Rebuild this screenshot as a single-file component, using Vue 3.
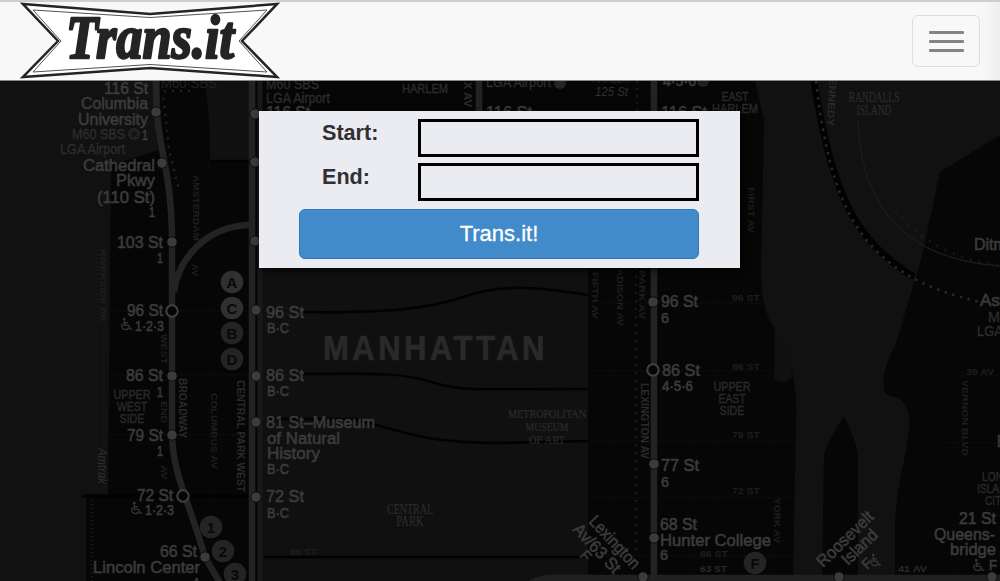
<script setup>
import { ref } from 'vue'

const start = ref('')
const end = ref('')

// Each label: text, x, baseline y, width, anchor (s/m/e), size, tone class
const labels = [
  ['116 St', 148, 94, 44, 'e', 17, 'station'],
  ['Columbia', 148, 109, 67, 'e', 17, 'station'],
  ['University', 148, 125, 70, 'e', 17, 'station'],
  ['M60 SBS', 125, 139, 53, 'e', 14.5, 'route'],
  ['1', 148, 140, 6, 'e', 14, 'station'],
  ['LGA Airport', 125, 154, 65, 'e', 14.5, 'route'],
  ['Cathedral', 155, 171, 72, 'e', 17, 'station'],
  ['Pkwy', 155, 186, 39, 'e', 17, 'station'],
  ['(110 St)', 155, 203, 58, 'e', 17, 'station'],
  ['1', 155, 217, 6, 'e', 14, 'station'],
  ['103 St', 163, 248, 46, 'e', 17, 'station'],
  ['1', 163, 263, 6, 'e', 14, 'station'],
  ['96 St', 163, 316, 36, 'e', 17, 'station'],
  ['1·2·3', 164, 331, 29, 'e', 14.5, 'station'],
  ['86 St', 163, 381, 37, 'e', 17, 'station'],
  ['1', 163, 397, 6, 'e', 14, 'station'],
  ['UPPER', 132, 399, 37, 'm', 13, 'area'],
  ['WEST', 132, 411, 30, 'm', 13, 'area'],
  ['SIDE', 132, 423, 25, 'm', 13, 'area'],
  ['79 St', 163, 441, 36, 'e', 17, 'station'],
  ['1', 163, 456, 6, 'e', 14, 'station'],
  ['72 St', 173, 501, 36, 'e', 17, 'station'],
  ['1·2·3', 174, 515, 29, 'e', 14.5, 'station'],
  ['66 St', 197, 557, 37, 'e', 17, 'station'],
  ['Lincoln Center', 200, 573, 107, 'e', 17, 'station'],
  ['1', 200, 588, 6, 'e', 14, 'station'],
  ['M60·SBS', 161, 88, 56, 's', 14, 'faint'],
  ['M60 SBS', 266, 89, 53, 's', 14.5, 'route'],
  ['LGA Airport', 266, 103, 64, 's', 14.5, 'route'],
  ['116 St', 266, 118, 44, 's', 17, 'station'],
  ['HARLEM', 402, 93, 46, 's', 13.5, 'area'],
  ['LGA Airport', 486, 87, 65, 's', 14.5, 'route'],
  ['116 St', 486, 118, 46, 's', 17, 'station'],
  ['HARLEM', 592, 83, 38, 's', 13, 'faint'],
  ['125 St', 595, 96, 33, 's', 12, 'slanted'],
  ['4·5·6', 663, 86, 33, 's', 15, 'station'],
  ['116 St', 661, 118, 46, 's', 17, 'station'],
  ['EAST', 735, 101, 27, 'm', 13, 'area'],
  ['HARLEM', 735, 113, 46, 'm', 13, 'area'],
  ['96 St', 266, 318, 38, 's', 17, 'station'],
  ['B·C', 267, 333, 22, 's', 14.5, 'station'],
  ['86 St', 266, 381, 38, 's', 17, 'station'],
  ['B·C', 267, 396, 22, 's', 14.5, 'station'],
  ['81 St–Museum', 266, 428, 109, 's', 17, 'station'],
  ['of Natural', 267, 444, 73, 's', 17, 'station'],
  ['History', 267, 459, 53, 's', 17, 'station'],
  ['B·C', 267, 474, 22, 's', 14.5, 'station'],
  ['72 St', 266, 502, 38, 's', 17, 'station'],
  ['B·C', 267, 518, 22, 's', 14.5, 'station'],
  ['66 ST', 290, 555, 27, 's', 9, 'street'],
  ['METROPOLITAN', 547, 418, 78, 'm', 13, 'serif'],
  ['MUSEUM', 547, 431, 43, 'm', 13, 'serif'],
  ['OF ART', 547, 444, 36, 'm', 13, 'serif'],
  ['CENTRAL', 410, 514, 46, 'm', 14, 'serif'],
  ['PARK', 410, 526, 27, 'm', 14, 'serif'],
  ['96 St', 661, 307, 37, 's', 17, 'station'],
  ['6', 661, 323, 8, 's', 14.5, 'station'],
  ['86 St', 662, 376, 38, 's', 17, 'station'],
  ['4·5·6', 662, 391, 31, 's', 14.5, 'station'],
  ['UPPER', 732, 391, 37, 'm', 13, 'area'],
  ['EAST', 732, 403, 27, 'm', 13, 'area'],
  ['SIDE', 732, 415, 25, 'm', 13, 'area'],
  ['77 St', 661, 471, 38, 's', 17, 'station'],
  ['6', 661, 487, 8, 's', 14.5, 'station'],
  ['68 St', 660, 530, 37, 's', 17, 'station'],
  ['Hunter College', 660, 546, 111, 's', 17, 'station'],
  ['6', 660, 560, 8, 's', 14.5, 'station'],
  ['96 ST', 732, 301, 28, 's', 9, 'street'],
  ['86 ST', 732, 370, 28, 's', 9, 'street'],
  ['79 ST', 732, 438, 28, 's', 9, 'street'],
  ['72 ST', 732, 494, 28, 's', 9, 'street'],
  ['66 ST', 700, 557, 28, 's', 9, 'street'],
  ['63 ST', 700, 572, 27, 's', 9, 'street bright'],
  ['39 AV', 966, 375, 28, 's', 9, 'street'],
  ['41 AV', 898, 572, 29, 's', 9, 'street bright'],
  ['RANDALLS', 874, 102, 51, 'm', 14, 'serif'],
  ['ISLAND', 874, 115, 35, 'm', 14, 'serif'],
  ['Ditmars', 974, 250, 55, 's', 17, 'station'],
  ['Astoria', 980, 306, 53, 's', 17, 'station'],
  ['M60', 988, 322, 28, 's', 14.5, 'route'],
  ['LGA Airport', 977, 336, 66, 's', 14.5, 'route'],
  ['E', 997, 447, 9, 's', 17, 'station'],
  ['LONG', 982, 481, 29, 's', 13, 'area'],
  ['ISLAND', 977, 493, 37, 's', 13, 'area'],
  ['CITY', 985, 505, 23, 's', 13, 'area'],
  ['21 St', 996, 524, 37, 'e', 17, 'station'],
  ['Queens-', 995, 540, 61, 'e', 17, 'station'],
  ['bridge', 996, 555, 46, 'e', 17, 'station'],
  ['F', 997, 570, 8, 'e', 14.5, 'station'],
]

// Street names turned along the avenues: text, x, y, width, size, angle, tone
const turned = [
  ['RIVERSIDE DR', 100, 249, 73, 9, 90, 'street'],
  ['AMSTERDAM', 193, 175, 66, 9, 90, 'street'],
  ['AV', 192, 264, 12, 9, 90, 'street'],
  ['WEST', 161, 334, 30, 9, 90, 'street'],
  ['END', 161, 401, 22, 9, 90, 'street'],
  ['AV', 161, 465, 14, 9, 90, 'street'],
  ['BROADWAY', 179, 378, 60, 10, 90, 'street bright'],
  ['COLUMBUS AV', 211, 393, 76, 9, 90, 'street'],
  ['CENTRAL PARK WEST', 237, 380, 112, 10, 90, 'street bright'],
  ['Amtrak', 98, 448, 36, 12, 90, 'slanted'],
  ['LENOX AV', 464, 50, 57, 11, 90, 'street bright'],
  ['FIFTH AV', 592, 272, 47, 9, 90, 'street'],
  ['MADISON AV', 617, 260, 66, 9, 90, 'street'],
  ['PARK AV', 639, 270, 49, 9, 90, 'street'],
  ['LEXINGTON AV', 641, 383, 76, 10, 90, 'street bright'],
  ['FIRST AV', 748, 187, 46, 9, 90, 'street'],
  ['YORK AV', 774, 498, 45, 9, 90, 'street'],
  ['VERNON BLVD', 962, 380, 76, 9, 90, 'street'],
  ['KENNEDY', 830, 69, 57, 10, 93, 'street bright'],
  ['Lexington', 588, 522, 66, 17, 47, 'station'],
  ['Av/63 St', 572, 530, 61, 17, 47, 'station'],
  ['F', 579, 556, 9, 15, 47, 'station'],
  ['Roosevelt', 823, 568, 72, 17, -44, 'station'],
  ['Island', 848, 566, 43, 17, -44, 'station'],
  ['F', 867, 570, 9, 14, -44, 'station'],
]

const stops = [
  [156, 112], [162, 163], [172, 242], [172, 376], [172, 435], [205, 557],
  [255, 114], [255, 162], [255, 241], [256, 310], [256, 376], [256, 422], [256, 497],
  [653, 302], [654, 464], [654, 538], [643, 577], [839, 577], [992, 577],
]
const hubs = [[172, 311], [183, 496], [653, 370]]
const bullets = [
  ['A', 232, 282, 1], ['C', 232, 308, 1], ['B', 232, 333, 0], ['D', 232, 359, 0],
  ['1', 211, 527, 0], ['2', 223, 551, 0], ['3', 235, 574, 0], ['F', 755, 563, 0],
]
const access = [[119, 317], [129, 501], [971, 558], [868, 553]]
const anchors = { s: 'start', m: 'middle', e: 'end' }
</script>

<template>
  <div class="page">
    <header class="navbar">
      <a class="brand" aria-label="Trans.it">
        <svg width="260" height="78" viewBox="20 2 260 78">
          <path d="M23 4 L150 14 L277 4 L242 41 L277 77 L150 68 L23 77 L58 41 Z" fill="#fff" stroke="#252325" stroke-width="2.5" />
          <path d="M33 10 L150 17.5 L267 10 L239 41 L267 72 L150 64.5 L33 72 L61 41 Z" fill="none" stroke="#555355" stroke-width="1" />
          <text class="logo-text" x="66" y="58" textLength="168" lengthAdjust="spacingAndGlyphs">Trans.it</text>
        </svg>
      </a>
      <button class="toggle" type="button" aria-label="Menu"><i></i><i></i><i></i></button>
    </header>

    <main class="hero">
      <svg class="map" width="1000" height="500" viewBox="0 81 1000 500">
        <defs>
          <symbol id="wheelchair" viewBox="0 0 16 16">
            <circle cx="6" cy="1.8" r="1.6" fill="#363636" />
            <path d="M6 3.5 V9 H11 L13 13.5 L15 13 M6 6 H10 M4 7 A4.2 4.2 0 1 0 11 12" fill="none" stroke="#363636" stroke-width="1.5" />
          </symbol>
        </defs>
        <rect y="81" width="1000" height="500" fill="#111" />
        <!-- Manhattan -->
        <path d="M111 165 L160 150 V81 H755 L764 120 L761 275 Q762 310 773 326 L788 355 Q798 390 796 420 L793 581 H86 V494 H108 Z" fill="#060606" />
        <path d="M774 326 Q791 352 792 377 Q783 387 774 379 Z" fill="#101010" />
        <path d="M205 81 H250 V160 H210 V130 Z" fill="#101010" />
        <rect x="262" y="160" width="326" height="421" fill="#101010" />
        <!-- Queens and Roosevelt Island -->
        <path d="M1000 135 L940 172 L921 260 L896 343 Q881 370 884 390 Q885 397 896 397 Q911 403 909 430 Q907 450 902 470 Q895 500 895 530 V581 H1000 Z" fill="#060606" />
        <path d="M822 581 L824 455 Q828 440 844 416 Q856 440 858 455 V581 Z" fill="#060606" />

        <g fill="none" stroke="#090909">
          <path d="M158 160 V581 M209 160 V581 M614 270 V575 M690 270 V575 M717 270 V575 M744 270 V575 M774 326 V575 M959 340 V581" />
          <path d="M111 311 H250 M111 375 H250 M111 435 H250 M588 303 H765 M588 371 H775 M588 441 H793 M588 498 H793 M588 556 H793 M942 376 H1000 M940 443 H1000" stroke-width="2" />
        </g>
        <g fill="none" stroke="#020202" stroke-width="2.5">
          <path d="M304 312 C380 313 425 310 463 297 S530 286 588 295" />
          <path d="M304 374 C380 373 405 373 435 383 S510 388 588 389" />
          <path d="M266 419 H355 C395 429 420 443 500 443 L588 441" />
          <path d="M264 557 H588 M82 496 H250 M210 161 H250" />
          <path d="M814 81 C831 190 853 240 914 277" stroke-width="7" />
        </g>
        <g fill="none" stroke="#222">
          <path d="M97 250 V494 M104 250 V494 M92 500 V581" stroke="#171717" stroke-width="3" stroke-dasharray="1 3" />
          <path d="M636 260 V555" stroke="#191919" stroke-width="2" stroke-dasharray="2 6" />
          <path d="M190 91 H166 Q162 92 164 102 L169 150 L179 190" stroke-width="2.5" stroke-dasharray="2 6" />
          <path d="M816 81 C831 210 861 275 980 302" stroke="#292929" stroke-width="2.5" stroke-dasharray="2.5 5.5" />
          <path d="M858 120 C860 190 890 258 1000 266" stroke="#1b1b1b" stroke-width="1.5" />
          <path d="M896 211 Q933 257 1000 265" stroke="#242424" stroke-width="3" stroke-dasharray="1 8" />
        </g>
        <!-- Subway lines -->
        <g fill="none" stroke="#232323" stroke-width="6.5">
          <path d="M156 81 C155 150 172 162 172 243 V432 C172 472 187 496 205 557 L224 590" />
          <path d="M174 292 C178 260 205 226 250 225" />
          <path d="M252 81 V581" /><path d="M260 81 V581" stroke="#191919" stroke-width="5" />
          <path d="M479 81 V120 M654 81 V581" />
          <path d="M530 584 Q540 578 550 578 H1000" stroke="#202020" />
          <path d="M637 81 V112" stroke="#171717" stroke-dasharray="2 5" stroke-width="3" />
        </g>

        <text class="borough" x="323" y="360" textLength="225" lengthAdjust="spacingAndGlyphs">MANHATTAN</text>
        <text
          v-for="(l, i) in labels" :key="'l' + i" :class="l[6]" :x="l[1]" :y="l[2]"
          :text-anchor="anchors[l[4]]" :font-size="l[5]" :textLength="l[3]" lengthAdjust="spacingAndGlyphs"
        >{{ l[0] }}</text>
        <text
          v-for="(t, i) in turned" :key="'t' + i" :class="t[6]" :font-size="t[4]" :textLength="t[3]"
          lengthAdjust="spacingAndGlyphs" :transform="`translate(${t[1]} ${t[2]}) rotate(${t[5]})`"
        >{{ t[0] }}</text>

        <circle v-for="(s, i) in stops" :key="'s' + i" :cx="s[0]" :cy="s[1]" r="5.2" fill="#3b3b3b" stroke="#0c0c0c" />
        <circle v-for="(h, i) in hubs" :key="'h' + i" :cx="h[0]" :cy="h[1]" r="5.7" fill="#050505" stroke="#414141" stroke-width="2" />
        <g v-for="(b, i) in bullets" :key="'b' + i">
          <circle :cx="b[1]" :cy="b[2]" r="11.3" :fill="b[3] ? '#303030' : '#242424'" />
          <text class="bullet" :x="b[1]" :y="b[2] + 5.5" text-anchor="middle">{{ b[0] }}</text>
        </g>
        <circle cx="134" cy="134" r="6" fill="#242424" />
        <path d="M130 134 H138 M134 130 V138 M131 131 L137 137 M137 131 L131 137" stroke="#0c0c0c" />
        <circle cx="560" cy="83" r="6" fill="#242424" />
        <circle cx="703" cy="81" r="6" fill="#202020" />
        <use v-for="(a, i) in access" :key="'a' + i" href="#wheelchair" :x="a[0]" :y="a[1]" width="14" height="15" />
      </svg>

      <form class="panel" @submit.prevent>
        <div class="row"><label for="start">Start:</label><input id="start" v-model="start" type="text" /></div>
        <div class="row"><label for="end">End:</label><input id="end" v-model="end" type="text" /></div>
        <button class="submit" type="submit"><span>Trans.it!</span></button>
      </form>
    </main>
  </div>
</template>

<style>
body { background: #060606; overflow: hidden; }
</style>

<style scoped>
.page { width: 1000px; height: 581px; overflow: hidden; font-family: "Liberation Sans", Arial, sans-serif; }
.navbar {
  box-sizing: border-box; height: 81px; padding: 0 20px; display: flex; align-items: flex-start; justify-content: space-between;
  border-top: 2px solid #cecece; border-bottom: 1px solid #858985;
  background: linear-gradient(90deg, #f8f8f8 98%, #efefef 100%);
}
.brand { display: block; height: 78px; }
.brand svg { display: block; }
.logo-text {
  font: italic bold 61px "Liberation Serif", serif; fill: #252325; stroke: #252325; stroke-width: 2.4; stroke-linejoin: round;
}
.toggle {
  box-sizing: border-box; width: 68px; height: 52px; margin-top: 13px; padding: 1px 0 0; display: flex; flex-direction: column;
  align-items: center; justify-content: center; gap: 6px; border: 1.5px solid #ddd; border-radius: 6px; background: transparent;
}
.toggle i { width: 35px; height: 3px; border-radius: 1px; background: #858585; }
.hero { position: relative; height: 500px; padding-top: 30px; box-sizing: border-box; }
.map { position: absolute; inset: 0; font-family: "Liberation Sans", Arial, sans-serif; }
.station { fill: #3b3b3b; stroke: #3b3b3b; stroke-width: .6; }
.route { fill: #2d2d2d; stroke: #2d2d2d; stroke-width: .3; }
.area { fill: #2a2a2a; stroke: #2a2a2a; stroke-width: .4; }
.faint { fill: #212121; }
.slanted { fill: #303030; font-style: italic; }
.street { fill: #1e1e1e; font-weight: bold; }
.street.bright { fill: #2a2a2a; }
.serif { fill: #2c2c2c; stroke: #2c2c2c; stroke-width: .2; font-family: "Liberation Serif", serif; }
.borough { fill: #292929; stroke: #292929; stroke-width: .7; font-size: 35px; font-weight: bold; letter-spacing: 4px; }
.bullet { fill: #080808; font-size: 15px; font-weight: bold; }
.panel {
  position: relative; box-sizing: border-box; width: 481px; height: 157px; margin-left: 259px; padding: 8px 41px 9px 40px;
  display: flex; flex-direction: column; background: #ebebf2; box-shadow: 2px 3px 8px rgba(0, 0, 0, .7);
}
.row { display: flex; flex: none; justify-content: space-between; height: 38px; margin-bottom: 6px; padding-left: 23px; }
.row + .row { margin-bottom: 8px; }
label { color: #303033; font-size: 21.6px; font-weight: bold; line-height: 27px; }
input { box-sizing: border-box; width: 281px; height: 38px; padding: 4px 8px; border: 3px solid #000; border-radius: 0; background: transparent; font-size: 20px; outline: none; }
.submit {
  flex: 1; min-height: 0; padding: 0; border: 1px solid #3678b2; border-radius: 6px; background: #428bca; color: #fff;
  font: 22px/48px "Liberation Sans", Arial, sans-serif; -webkit-text-stroke: .3px #fff;
}
</style>
